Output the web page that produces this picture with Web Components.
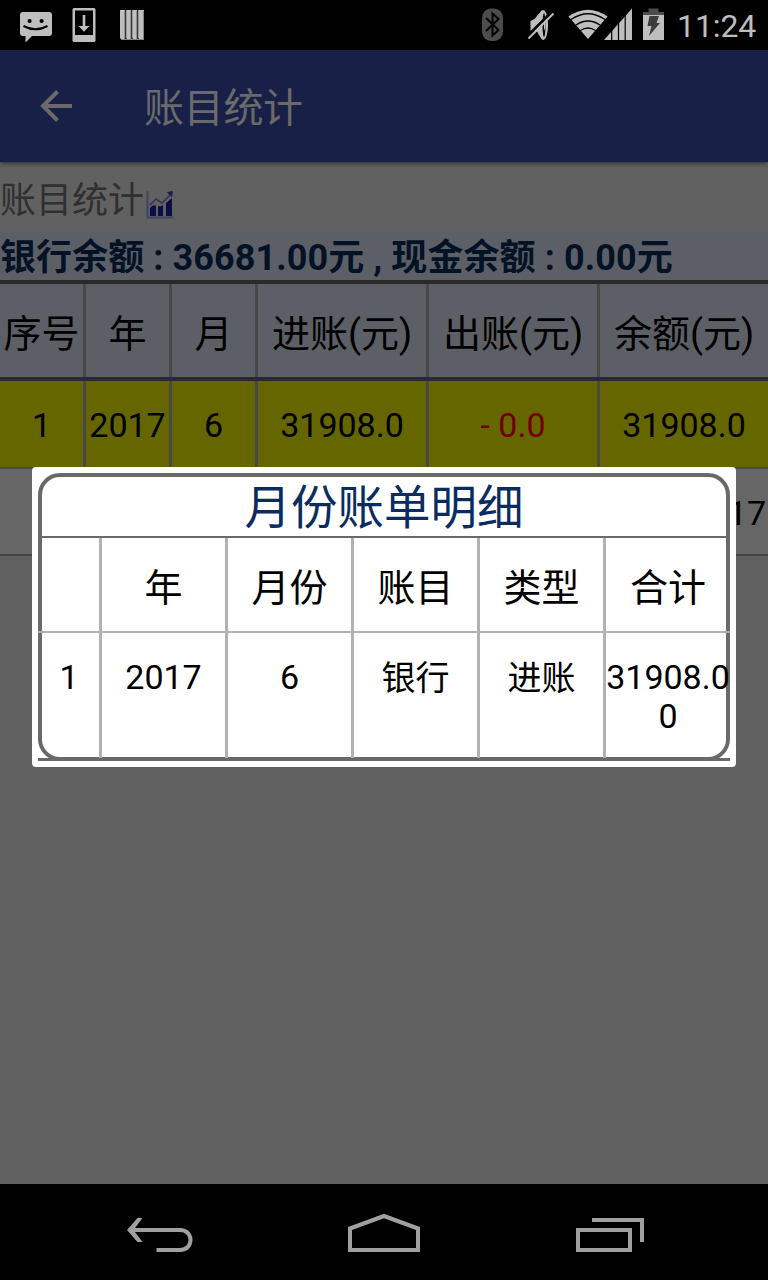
<!DOCTYPE html>
<html lang="zh-CN">
<head>
<meta charset="utf-8">
<title>账目统计</title>
<style>
html,body{margin:0;padding:0}
body{width:768px;height:1280px;overflow:hidden;background:#000;font-family:Roboto,"Noto Sans CJK SC",sans-serif;color:#000}
</style>
</head>
<body>
<account-screen></account-screen>
<script>
const define = (name, html) => customElements.define(name, class extends HTMLElement {
  constructor() {
    super();
    const t = document.createElement('template');
    t.innerHTML = html;
    this.attachShadow({ mode: 'open' }).append(t.content.cloneNode(true));
  }
});

define('status-bar', `
<style>
:host{display:flex;height:50px;background:#000;color:#bebebe;justify-content:space-between;font-size:32px;line-height:50px}
svg{display:block;flex:none}
.right{display:flex}
.time{width:91px;padding-top:1px;white-space:nowrap;letter-spacing:-.1px}
</style>
<svg width="160" height="50" viewBox="0 0 160 50">
  <path fill="#bebebe" d="M23 12h26q3 0 3 3v18q0 3-3 3H32l-6.500 6.500V36H23q-3 0-3-3V15q0-3 3-3z"/>
  <circle cx="29.600" cy="21" r="2.100"/><circle cx="41.600" cy="21" r="2.100"/>
  <path d="M23.500 26q12 6.500 24 0" fill="none" stroke="#000" stroke-width="2"/>
  <path fill="#bebebe" fill-rule="evenodd" d="M74 8h20q1.500 0 1.500 1.500v31q0 1.500-1.500 1.500H74q-1.500 0-1.500-1.500v-31Q72.500 8 74 8zM75 10.500V35h18V10.500z"/>
  <path fill="#bebebe" d="M82.700 15h2.600v11h4.200L84 31.800 78.500 26h4.200z"/>
  <g fill="#bebebe"><path d="M120 10h5.200v29H121l-1-1z"/><path d="M126.200 10h5v29h-4l-1-1z"/><path d="M132.200 10h5v29h-4l-1-1z"/><path d="M138.200 10h5.800v29h-5l-.8-1z"/></g>
  <path d="M124.700 11v28M130.700 11v28M136.700 11v28M143.500 11v28M121 39.500h23" stroke="#858585" stroke-width="1"/>
</svg>
<div class="right">
<svg width="207" height="50" viewBox="470 0 207 50">
  <rect x="482" y="8.500" width="21" height="32.500" rx="9" fill="#4c4c4c"/>
  <path d="M486 18l12.500 12-6 5.500v-22l6 5.500L486 31" fill="none" stroke="#000" stroke-width="2"/>
  <path fill="#bebebe" d="M530.500 21l4-2 7-8.500q1-.5 2-.5c3 1 4.500 8 4.500 15s-1.500 14-4.500 15q-1 0-2-1l-4.500-7.500-6.500-1z"/>
  <ellipse cx="544" cy="25" rx="1.500" ry="12" fill="#000"/>
  <path d="M544 19q3 6 0 12z" fill="#bebebe"/>
  <path d="M527 36.500l25-25" stroke="#000" stroke-width="2.500"/><path d="M528.500 38.500l25-25" stroke="#bebebe" stroke-width="2"/>
  <path fill="#bebebe" d="M568.500 16.500Q588 3 607.500 16.500L588 39z"/>
  <g fill="none" stroke="#000" stroke-width="1.400"><path d="M571 19.500q17-11.500 34 0"/><path d="M576 25q12-8 24 0"/><path d="M580.500 30.500q7.500-5 15 0"/></g>
  <path fill="#bebebe" d="M604 40L632 8.500V40z"/>
  <path d="M611.700 27v14M618.500 20v21M625.200 13v28" stroke="#000" stroke-width="1.200"/>
  <path fill="#4c4c4c" d="M648.500 8.500h10V12h5.500v3.500h-21V12h5.500z"/>
  <path fill="#bebebe" d="M643 15h21v25h-21z"/>
  <path fill="#3c3c3c" d="M649.500 16h9.500l-2.500 7h3.500l-11 13 2.500-10h-4z"/>
</svg>
<div class="time"><slot></slot></div>
</div>`);

define('app-bar', `
<style>
:host{display:flex;height:112px;background:#192048;color:#6a6a6a;align-items:center;font-size:40px;line-height:50px;box-shadow:0 1px 5px rgba(0,0,0,.6);position:relative;z-index:1}
svg{width:144px;height:112px;flex:none}
.t{padding-top:6px;letter-spacing:-.3px}
</style>
<svg viewBox="0 0 144 112"><path d="M72 56H43M57.500 41.500L43 56l14.500 14.500" fill="none" stroke="#6a6a6a" stroke-width="4"/></svg>
<div class="t"><slot></slot></div>`);

define('page-heading', `
<style>
:host{display:flex;height:69px;background:#616161;color:#303030;font-size:36px;line-height:78px;white-space:nowrap}
svg{margin-top:28px}
</style>
<div><slot></slot></div>
<svg width="32" height="34" viewBox="144 190 32 34">
<path d="M147.500 191v26.500h26" fill="none" stroke="#424262" stroke-width="2"/>
<path fill="#0c0c48" d="M150 208q3-4 6-2v10h-6zM158 206q3 1 5-1v11h-5zM166 203l6-5v18h-6z"/>
<path d="M150 205l6-6 6 4 9-9" fill="none" stroke="#34345a" stroke-width="1.600"/><path d="M167.500 192.500l5-1-1 5z" fill="#20204e" stroke="#20204e"/>
</svg>`);

define('balance-bar', `
<style>
:host{display:block;height:49px;background:#5c5f66;color:#041226;font-size:36px;font-weight:700;line-height:55px;white-space:nowrap;letter-spacing:.08px}
</style><slot></slot>`);

define('sheet-cell', `
<style>
:host{display:flex;box-sizing:border-box;justify-content:center;align-items:center;white-space:nowrap;border-right:3px solid var(--rule,#484848);min-width:0}
:host([last]){border-right:0}
</style><slot></slot>`);

define('sheet-row', `
<style>
:host{display:grid;grid-template-columns:var(--cols);height:var(--h);box-sizing:border-box}
</style><slot></slot>`);

define('bill-dialog', `
<style>
:host{display:block;position:absolute;left:32px;top:467px;width:704px;height:300px;box-sizing:border-box;padding:6px;background:#fff;border-radius:4px;z-index:3;--rule:#b2b2b2}
.frame{box-sizing:border-box;height:288px;border:4px solid #696967;border-radius:22px}
.title{height:59px;border-bottom:2px solid #696967;color:#0b2c60;text-align:center;font-size:46.500px;line-height:62px}
.rows{--cols:60px 126px 126px 126px 126px 124px}
.head{--h:93px;font-size:38px}
.mid{height:2px;background:#b2b2b2;margin:0 -4px;position:relative}
.data{--h:125px;font-size:34px;line-height:39px}
.data sheet-cell{align-items:flex-start;padding-top:25px}
.data .cjk{padding-top:26px}
.data sheet-cell:first-child{padding-right:3px}
.sum{text-align:center;display:block;flex:none}
.base{height:3px;background:#696967;margin:0 -4px}
</style>
<div class="frame">
<div class="title"><slot></slot></div>
<div class="rows">
<sheet-row class="head"><sheet-cell></sheet-cell><sheet-cell>年</sheet-cell><sheet-cell>月份</sheet-cell><sheet-cell>账目</sheet-cell><sheet-cell>类型</sheet-cell><sheet-cell last>合计</sheet-cell></sheet-row>
<div class="mid"></div>
<sheet-row class="data"><sheet-cell>1</sheet-cell><sheet-cell>2017</sheet-cell><sheet-cell>6</sheet-cell><sheet-cell class="cjk">银行</sheet-cell><sheet-cell class="cjk">进账</sheet-cell><sheet-cell last><span class="sum">31908.0<br>0</span></sheet-cell></sheet-row>
</div>
<div class="base"></div>
</div>`);

define('nav-bar', `
<style>:host{display:flex;height:96px;background:#000;justify-content:center}</style>
<svg width="768" height="96" viewBox="0 1184 768 96" fill="none" stroke="#a0a0a0" stroke-width="4">
<path d="M156.500 1250H180c14 0 14-20 0-20H131"/><path fill="#a0a0a0" stroke="none" d="M137.500 1218h5l-9 12 9 12h-5l-10.500-12z"/>
<path d="M350 1250v-21.500l34-12.500 34 12.500v21.500z"/>
<path d="M578 1230h52v20h-52zM592 1220h50v22"/>
</svg>`);

define('account-screen', `
<style>
:host{display:flex;flex-direction:column;width:768px;height:1280px;position:relative}
main{flex:1;background:#606060;display:block}
.sheet{--cols:86px 86px 86px 171px 171px 168px}
.head{--h:101px;background:#5c5f66;border-top:4px solid #2a2a2a;border-bottom:4px solid #2a2a2a;font-size:38px}
.data{--h:86px;background:#666600;font-size:34px}
.data sheet-cell{padding-top:2px}
.out{color:#720000}
.total{height:89px;box-sizing:border-box;background:#666;border-top:2px solid #484848;border-bottom:2px solid #444;text-align:right;font-size:34px;line-height:89px;padding-right:2px}
</style>
<status-bar>11:24</status-bar>
<app-bar>账目统计</app-bar>
<main>
<page-heading>账目统计</page-heading>
<balance-bar>银行余额 : 36681.00元 , 现金余额 : 0.00元</balance-bar>
<div class="sheet">
<sheet-row class="head"><sheet-cell>序号</sheet-cell><sheet-cell>年</sheet-cell><sheet-cell>月</sheet-cell><sheet-cell>进账(元)</sheet-cell><sheet-cell>出账(元)</sheet-cell><sheet-cell last>余额(元)</sheet-cell></sheet-row>
<sheet-row class="data"><sheet-cell>1</sheet-cell><sheet-cell>2017</sheet-cell><sheet-cell>6</sheet-cell><sheet-cell>31908.0</sheet-cell><sheet-cell class="out">- 0.0</sheet-cell><sheet-cell last>31908.0</sheet-cell></sheet-row>
<div class="total">17</div>
</div>
</main>
<nav-bar></nav-bar>
<bill-dialog>月份账单明细</bill-dialog>`);
</script>
</body>
</html>
